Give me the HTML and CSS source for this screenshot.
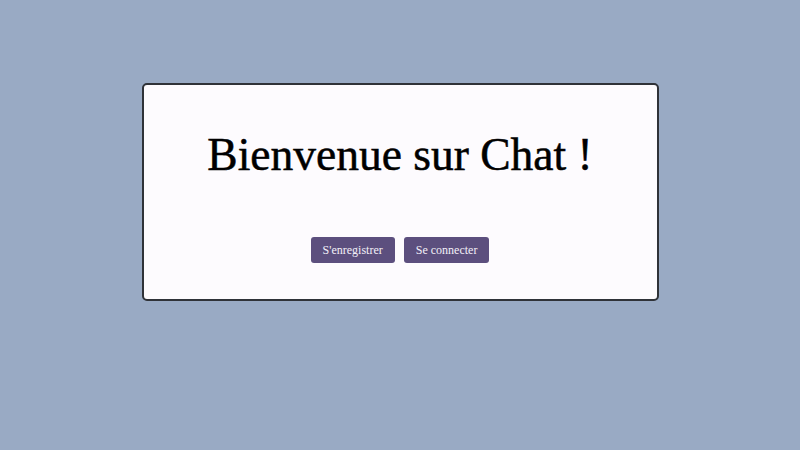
FILE: index.html
```html
<!DOCTYPE html>
<html lang="fr">
<head>
<meta charset="utf-8">
<title>Chat</title>
<link rel="stylesheet" href="styles.css">
</head>
<body>
<main class="page">
  <section class="card">
    <h1 class="title">Bienvenue sur Chat !</h1>
    <div class="actions">
      <button class="btn">S'enregistrer</button>
      <button class="btn">Se connecter</button>
    </div>
  </section>
</main>
</body>
</html>
```

FILE: styles.css
```css
html, body {
  margin: 0;
  padding: 0;
  height: 100%;
}
body {
  background: #99aac4;
  font-family: "Liberation Serif", "DejaVu Serif", serif;
}
.page {
  display: flex;
  justify-content: center;
  padding-top: 83px;
}
.card {
  box-sizing: border-box;
  width: 517px;
  height: 218px;
  background: #fdfbfe;
  border: 2px solid #2f3238;
  border-radius: 5px;
  display: flex;
  flex-direction: column;
  align-items: center;
}
.title {
  margin: 43px 0 0;
  font-weight: normal;
  font-size: 45.5px;
  color: #000;
  line-height: 54px;
  -webkit-text-stroke: 0.5px #000;
}
.actions {
  display: flex;
  gap: 9px;
  margin-top: 55px;
}
.btn {
  font-family: "Liberation Serif", "DejaVu Serif", serif;
  font-size: 12px;
  color: #f3f0f8;
  background: #5c4f7e;
  border: none;
  border-radius: 3px;
  height: 26px;
  padding: 0 12px;
}
```
